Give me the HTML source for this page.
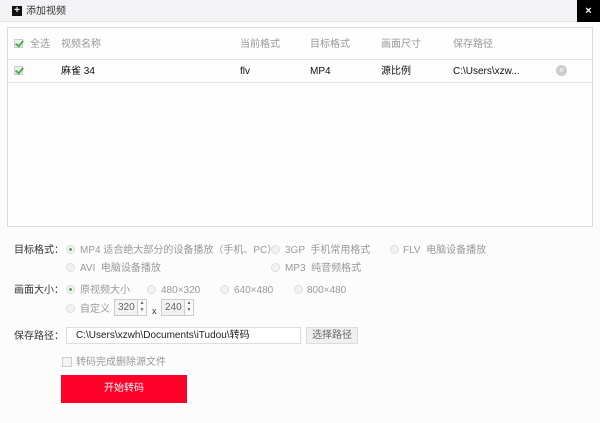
<!DOCTYPE html><html><head><meta charset="utf-8"><style>
*{margin:0;padding:0;box-sizing:border-box}
body{width:600px;height:423px;background:#fcfcfc;font-family:"Liberation Sans","Noto Sans CJK SC",sans-serif;font-size:10px;color:#333;position:relative;overflow:hidden}
.a{position:absolute;white-space:nowrap;line-height:17px;height:17px}
.top{position:absolute;left:0;top:0;width:600px;height:22px;background:#f3f3f5;border-bottom:1px solid #e6e6e8}
.close{position:absolute;right:0;top:0;width:23px;height:22px;background:#000;color:#fff;font-weight:bold;font-size:11px;text-align:center;line-height:22px}
.box{position:absolute;left:7px;top:27px;width:586px;height:200px;border:1px solid #dcdcdc;background:#fdfdfd}
.hl{position:absolute;left:0;width:584px;height:1px;background:#e4e4e4}
.chk{position:absolute;width:9px;height:9px;border:1px solid #ccc;background:#eee}
.chk:after{content:"";position:absolute;left:2px;top:-1px;width:3px;height:6px;border:solid #4caf50;border-width:0 2px 2px 0;transform:rotate(40deg)}
.g{color:#999}
.r{position:absolute;width:9px;height:9px;border-radius:50%;border:1px solid #ddd;background:#f2f2f2}
.r.on:after{content:"";position:absolute;left:2px;top:2px;width:3px;height:3px;border-radius:50%;background:#4caf50}
.sp{position:absolute;height:17px;border:1px solid #ccc;background:#f2f2f2;color:#666;font-size:10px;line-height:15px;padding-left:3px}
.sp i{position:absolute;right:0;top:0;width:9px;height:15px;border-left:1px solid #ccc;background:#fafafa;font-style:normal;font-size:5px;line-height:7px;text-align:center;color:#666}
</style></head><body>
<div class="top"></div>
<div class="a" style="left:12px;top:6px;width:10px;height:10px;background:#111;color:#fff;font-size:10px;line-height:10px;text-align:center;font-weight:bold">+</div>
<div class="a" style="left:26px;top:3px">添加视频</div>
<div class="close">×</div>
<div class="box">
<div class="hl" style="top:31px"></div>
<div class="hl" style="top:54px"></div>
</div>
<div class="chk" style="left:14px;top:39px"></div>
<div class="a g" style="left:30px;top:36px">全选</div>
<div class="a g" style="left:61px;top:36px">视频名称</div>
<div class="a g" style="left:240px;top:36px">当前格式</div>
<div class="a g" style="left:310px;top:36px">目标格式</div>
<div class="a g" style="left:381px;top:36px">画面尺寸</div>
<div class="a g" style="left:453px;top:36px">保存路径</div>
<div class="chk" style="left:14px;top:66px"></div>
<div class="a" style="left:61px;top:63px;color:#111">麻雀 34</div>
<div class="a" style="left:240px;top:63px;color:#111">flv</div>
<div class="a" style="left:310px;top:63px;color:#111">MP4</div>
<div class="a" style="left:381px;top:63px;color:#111">源比例</div>
<div class="a" style="left:453px;top:63px;color:#111">C:\Users\xzw...</div>
<div class="a" style="left:556px;top:65px;width:11px;height:11px;border-radius:50%;background:#ccc;color:#fff;font-size:9px;line-height:11px;text-align:center">×</div>

<div class="a" style="left:14px;top:242px">目标格式：</div>
<div class="r on" style="left:66px;top:245px"></div><div class="a g" style="left:80px;top:242px">MP4 适合绝大部分的设备播放（手机、PC）</div>
<div class="r" style="left:271px;top:245px"></div><div class="a g" style="left:285px;top:242px">3GP &nbsp;手机常用格式</div>
<div class="r" style="left:390px;top:245px"></div><div class="a g" style="left:403px;top:242px">FLV &nbsp;电脑设备播放</div>
<div class="r" style="left:66px;top:263px"></div><div class="a g" style="left:80px;top:260px">AVI &nbsp;电脑设备播放</div>
<div class="r" style="left:271px;top:263px"></div><div class="a g" style="left:285px;top:260px">MP3 &nbsp;纯音频格式</div>

<div class="a" style="left:14px;top:282px">画面大小：</div>
<div class="r on" style="left:66px;top:285px"></div><div class="a g" style="left:80px;top:282px">原视频大小</div>
<div class="r" style="left:147px;top:285px"></div><div class="a g" style="left:161px;top:282px">480×320</div>
<div class="r" style="left:220px;top:285px"></div><div class="a g" style="left:234px;top:282px">640×480</div>
<div class="r" style="left:294px;top:285px"></div><div class="a g" style="left:307px;top:282px">800×480</div>
<div class="r" style="left:66px;top:304px"></div><div class="a g" style="left:80px;top:301px">自定义</div>
<div class="sp" style="left:114px;top:299px;width:33px">320<i>▲<br>▼</i></div>
<div class="a" style="left:152px;top:303px;font-size:9px">x</div>
<div class="sp" style="left:161px;top:299px;width:33px">240<i>▲<br>▼</i></div>

<div class="a" style="left:14px;top:328px">保存路径：</div>
<div class="a" style="left:66px;top:327px;width:235px;height:17px;border:1px solid #ddd;background:#fff;padding-left:9px;line-height:15px;color:#222">C:\Users\xzwh\Documents\iTudou\转码</div>
<div class="a" style="left:306px;top:327px;width:52px;height:17px;border:1px solid #ddd;background:#f0f0f0;color:#666;text-align:center;line-height:15px">选择路径</div>
<div class="a" style="left:62px;top:357px;width:10px;height:10px;border:1px solid #ccc;background:#f3f3f3"></div>
<div class="a g" style="left:76px;top:354px">转码完成删除源文件</div>
<div class="a" style="left:61px;top:375px;width:126px;height:28px;background:#ff0028;color:#fff;text-align:center;line-height:28px">开始转码</div>
</body></html>
